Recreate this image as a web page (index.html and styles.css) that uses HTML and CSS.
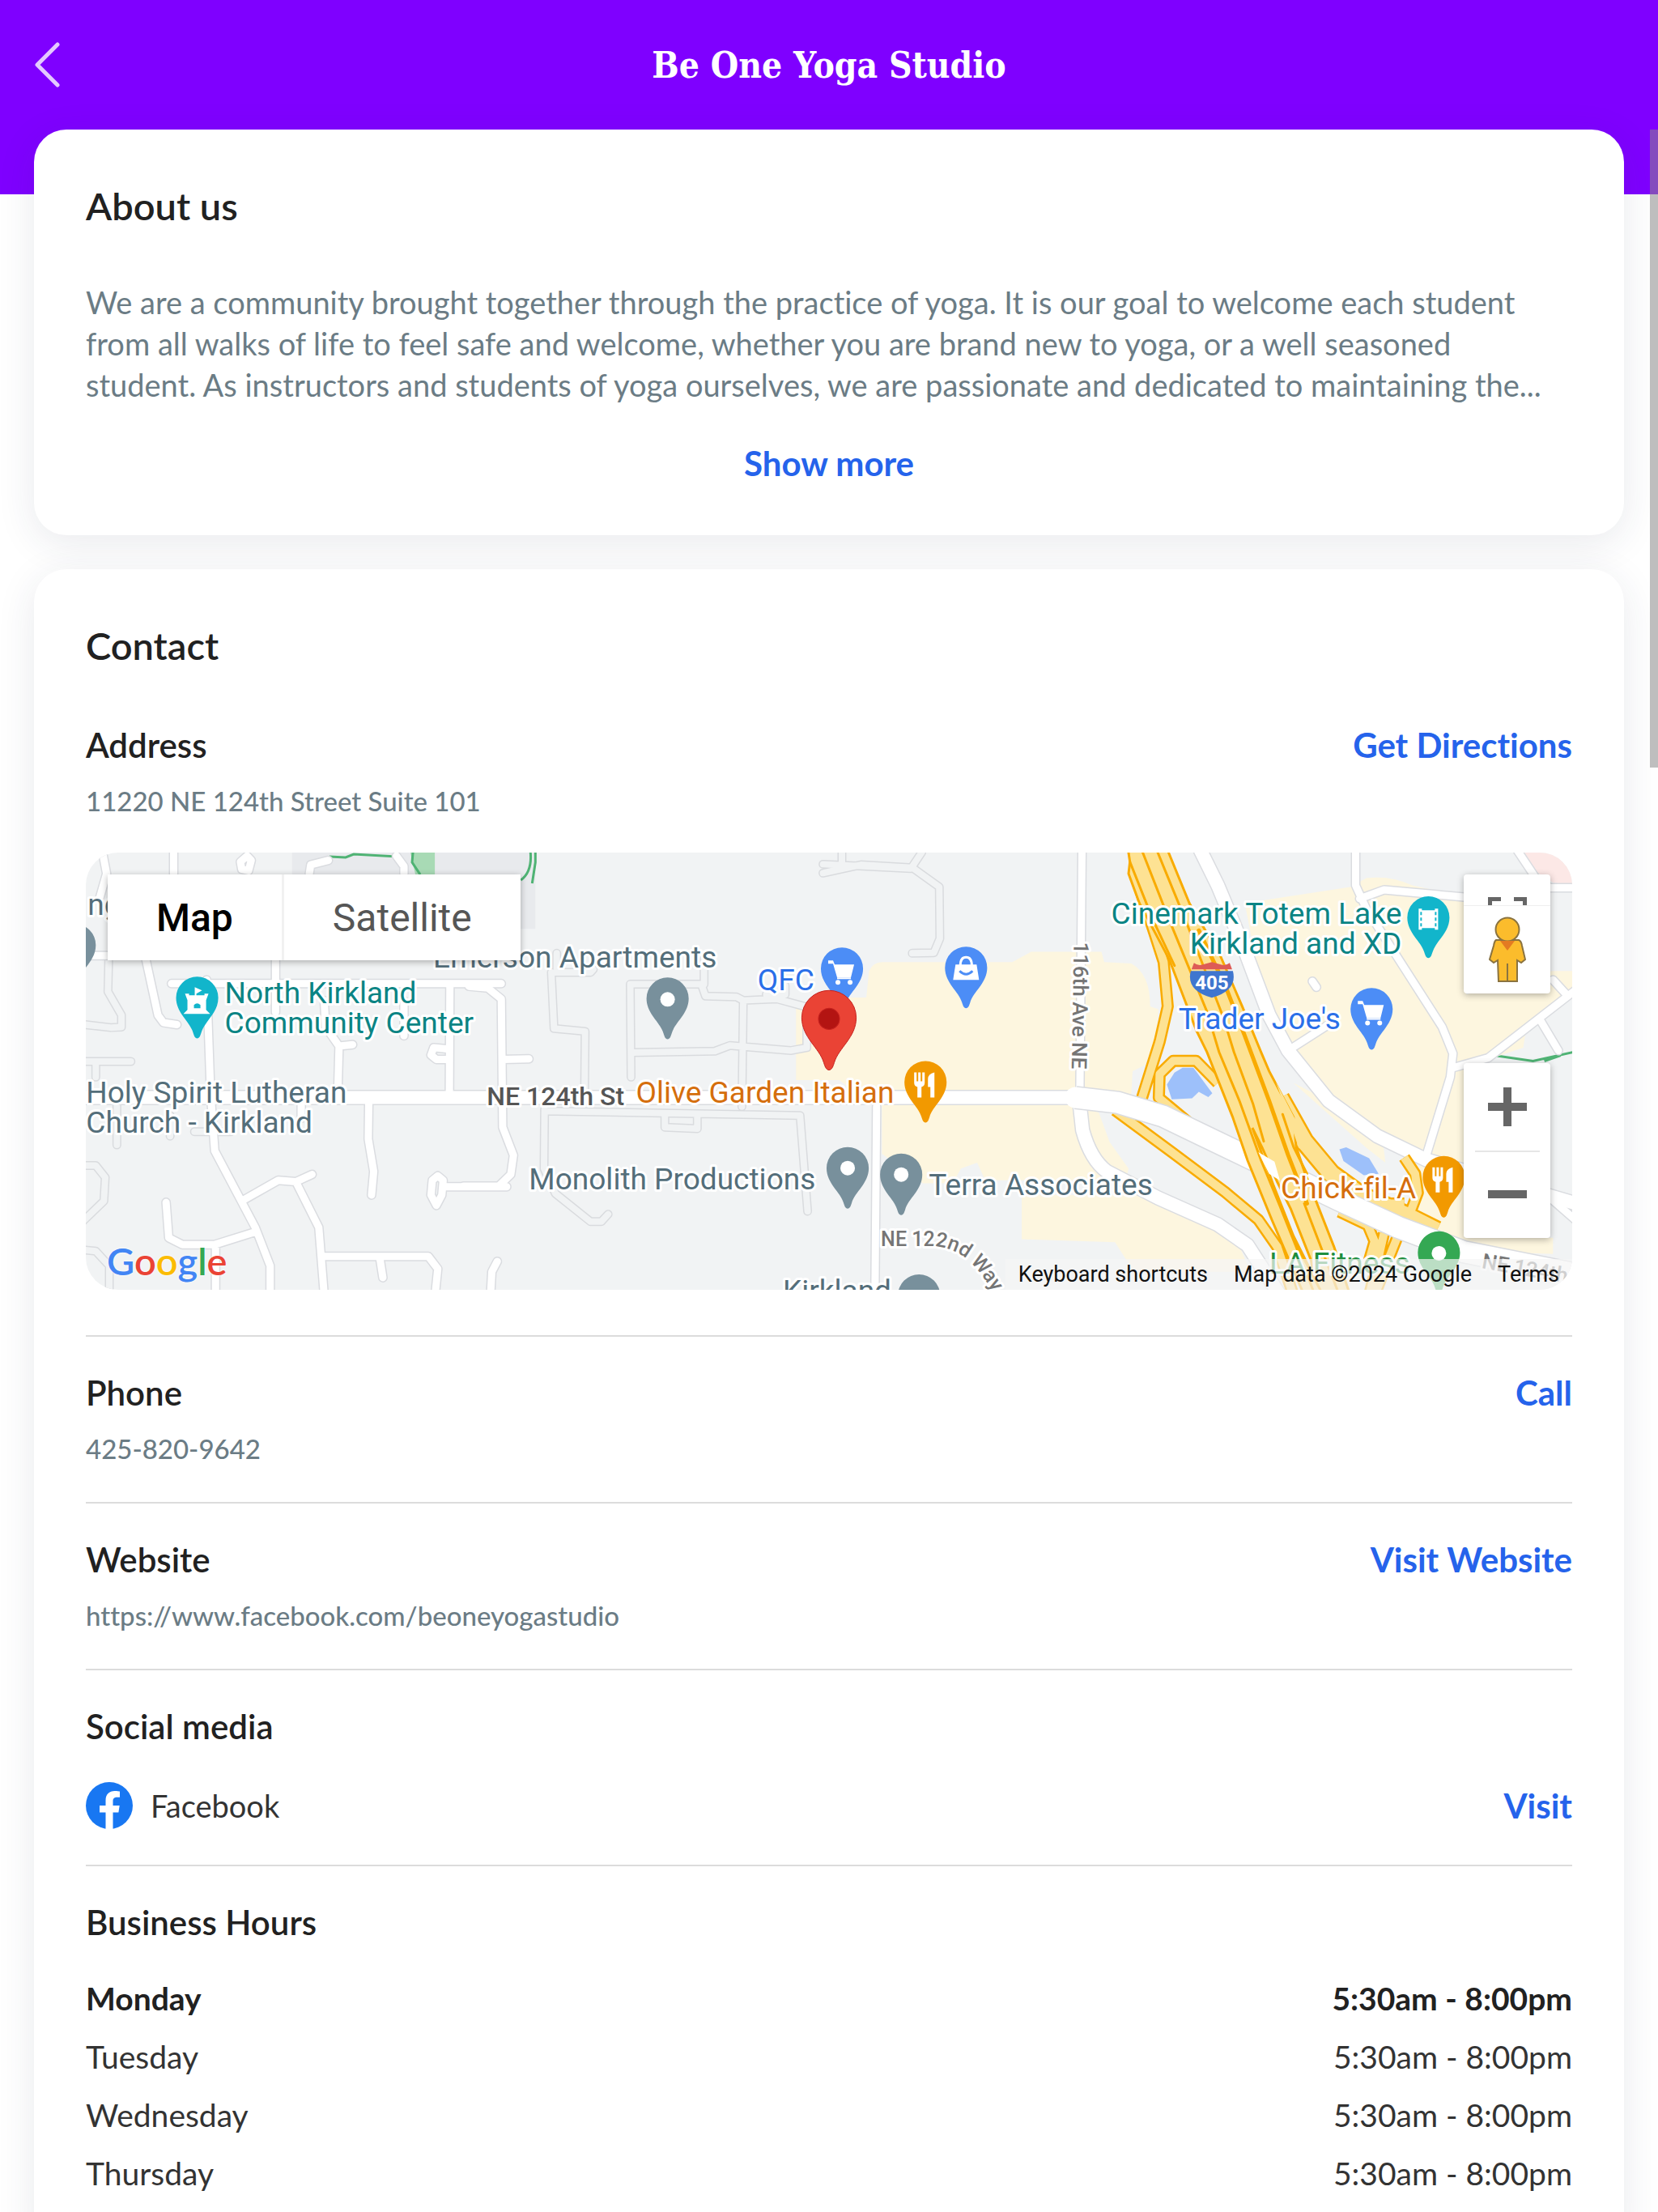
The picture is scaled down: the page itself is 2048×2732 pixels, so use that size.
FILE: index.html
```html
<!DOCTYPE html>
<html lang="en">
<head>
<meta charset="utf-8">
<meta name="viewport" content="width=device-width, initial-scale=1">
<title>Be One Yoga Studio</title>
<link rel="stylesheet" href="styles.css">
</head>
<body>
<div class="app">
  <header class="topbar">
    <button class="back" type="button" aria-label="Back">
      <svg viewBox="0 0 32 56" width="32" height="56"><path d="M29 3 4 28l25 25" fill="none" stroke="currentColor" stroke-width="5" stroke-linecap="round" stroke-linejoin="round"/></svg>
    </button>
    <h1 class="title">Be One Yoga Studio</h1>
  </header>

  <main class="content">
    <section class="card">
      <h2 class="card-title">About us</h2>
      <p class="about">We are a community brought together through the practice of yoga. It is our goal to welcome each student<br>from all walks of life to feel safe and welcome, whether you are brand new to yoga, or a well seasoned<br>student. As instructors and students of yoga ourselves, we are passionate and dedicated to maintaining the...</p>
      <button class="link show-more" type="button">Show more</button>
    </section>

    <section class="card">
      <h2 class="card-title">Contact</h2>

      <div class="entry entry-first">
        <div class="row"><h3 class="label">Address</h3><a class="link" href="#directions">Get Directions</a></div>
        <p class="value">11220 NE 124th Street Suite 101</p>
        <div class="map">
          <svg class="map-art" viewBox="0 0 1836 539" preserveAspectRatio="xMidYMid slice">
            <defs>
              <path id="pin" d="M0 0C-3 0-4-4-5-7C-9-21-26-31-26-50A26 26 0 0 1 26-50C26-31 9-21 5-7C4-4 3 0 0 0z"/>
              <g id="cart"><path d="M-17-60h6l2 5h24l-4 16H-6l-5-17h-6z"/><path d="M-6-38h17" stroke="#fff" stroke-width="2"/><circle cx="-5" cy="-33" r="3"/><circle cx="10" cy="-33" r="3"/></g>
              <g id="food"><path d="M-14-62h3v11h2v-11h3v11h2v-11h3v13q0 4-4 5v13h-5v-13q-4-1-4-5z"/><path d="M11-62v31H6v-13H3v-10q0-6 8-8z"/></g>
              <g id="lots">
                <g transform="translate(474 -14) scale(.3333 .3635)">
                  <path d="M305 445 315 635 430 645 428 840M325 380v65M320 445H450L460 435M870 400V485M600 800 597 485H820L860 485 875 525 990 528 1015 540 1140 535 1240 560M1015 540 1010 900M607 717 910 712 965 693 1190 710 1250 700V620M280 910 278 1110 320 1195 450 1290H490L515 1265M280 915 1225 930 1253 1255M725 930V970L845 975V930M1380 38V85M1310 108 1450 80 1640 90M1100 520H1170V490"/>
                </g>
                <g transform="translate(954 -14) scale(.3333 .3635)">
                  <path d="M-130 78 195 93 235 38M205 93 300 155 302 330 280 378 200 380"/>
                </g>
                <g transform="translate(-6 -14) scale(.3333 .3635)">
                  <path d="M108 390 105 510 155 590V630L115 632 0 620M0 1100H60L95 1140 90 1220 0 1300M0 1385 60 1390 110 1440V1540M0 747H190M60 755V800M138 890V1030M335 930V1000M425 985H560"/>
                </g>
              </g>
              <g id="streets">
                <g transform="translate(-6 -14) scale(.3333 .3635)">
                  <path d="M85 38 100 110 75 190M348 38V110M620 50 595 70 600 95 625 100 635 65zM0 388H100M725 400V580M340 483H1490L1560 483M470 470 485 860 500 1050 650 1310 705 1440V1540M610 1215 735 1150 800 1155 860 1130M800 1155 885 1310 905 1540M905 1408H1290L1325 1450 1315 1540M1110 1410 1122 1480M320 1225 330 1345 380 1368H500L650 1325M503 1368V1540M905 540 910 630 960 695 955 860M960 695 1010 690M1200 540V660M1370 490 1368 860M1365 705 1310 700 1300 725 1320 740H1365M1070 880 1068 1010 1088 1120 1080 1200M820 890V940M1325 1135 1305 1150 1300 1200 1320 1235 1340 1200 1345 1150zM1350 1172 1580 1172M850 110 855 80 920 65M1172 50 1200 85V110M245 400 290 590 310 615 360 622"/>
                </g>
                <g transform="translate(474 -14) scale(.3333 .3635)">
                  <path d="M0 492 70 498 120 535 125 970 165 1065 155 1130 110 1170H-20M125 740 222 738M80 1540 85 1460 105 1425"/>
                </g>
                <g transform="translate(954 -14) scale(.3333 .3635)">
                  <path d="M828 20 820 860M68 900 62 1540"/>
                </g>
                <g transform="translate(1394 -14) scale(.3333 .3635)">
                  <path d="M520 20V150L560 230 700 430 840 630 880 720 870 800 780 1070M535 195 625 165 930 190M885 767 1010 735 1340 500M1110 20 1190 130 1240 158H1340M1250 470 1300 520M1205 610 1270 710M270 710 440 610M360 475 375 495M1240 1210 1340 1290"/>
                </g>
              </g>
              <g id="avenues">
                <path d="M0 302H1220"/>
                <g transform="translate(954 -14) scale(.3333 .3635)">
                  <path d="M818 880 830 980Q860 1080 920 1120L1110 1210 1330 1300 1440 1370 1560 1540"/>
                </g>
                <g transform="translate(1394 -14) scale(.3333 .3635)">
                  <path d="M-60 20 10 150 110 370 200 590 270 710 420 880 600 1000 780 1080 1340 1230"/>
                </g>
              </g>
              <path id="arterial" d="M1222 302 1274 308 1330 325 1390 354 1440 378 1480 396 1546 428 1620 462 1700 492 1840 520"/>
              <g id="ramps">
                <g transform="translate(954 -14) scale(.3333 .3635)">
                  <path d="M1020 100 1095 310 1130 410 1145 560 1115 680 1050 870M1230 960 1112 870 1115 790 1165 745H1250L1330 820"/>
                </g>
                <g transform="translate(1274 246) scale(.3333)">
                  <path d="M-10 215 200 370 400 520 520 620 590 720 650 900M1060 390 1100 450 1110 520 1070 625M970 560H1060M820 590 925 640 950 700 930 770M1040 670 1000 770 950 900M985 670 960 780 930 900"/>
                </g>
              </g>
              <path id="exit" transform="translate(1274 246) scale(.3333)" d="M600 170 690 330 790 450 900 530 1060 600 1180 660"/>
              <path id="way" d="M982 485H1046Q1072 487 1089 502T1122 545"/>
            </defs>

            <rect width="1836" height="539" fill="#f1f3f4"/>
            <path d="M256 0h300v94H256z" fill="#e8eaed"/>
            <path d="M402 0h30v27h-24z" fill="#a8dab5"/>
            <g class="trail"><path d="M302 5 322 6 332 2 385 5V0M405 0 404 12 414 27M550 0Q552 24 538 34M556 0V12L552 38"/><path d="M1738 250 1786 257 1836 246M1800 257 1820 250"/></g>
            <g fill="#fdf6df">
              <path transform="translate(954 -14) scale(.3333 .3635)" d="M-230 560-110 540-90 530 30 530 40 440Q55 410 90 410H570L640 375H900L910 410 1010 415Q1080 450 1080 560L1110 570 1100 690 1060 760 1015 780 1010 860H0L-70 810H-230zM88 890H790L890 920 930 1020 1000 1110 990 1150H470L440 1090 380 1110 350 1160H240L88 1060zM605 1200H1120L1280 1300 1400 1350 1450 1460H1020L950 1360 605 1350z"/>
              <path transform="translate(1394 -14) scale(.3333 .3635)" d="M110 210 500 155 560 125Q650 115 730 150L930 190V520L1245 440H1326V500L1150 640 1140 700 1010 740 940 760 930 1110 1000 1345H1250V1400L950 1390 720 1290 760 1090 600 1000 400 870 280 700 200 560 150 400zM290 820 420 880 620 1010 630 1090 560 1040z"/>
            </g>
            <path transform="translate(1394 -14) scale(.3333 .3635)" d="M1140 38H1326V150L1250 140 1190 105z" fill="#fce8e6"/>
            <g fill="#9dc0fa">
              <path transform="translate(954 -14) scale(.3333 .3635)" d="M1142 825 1170 785 1200 768H1240L1270 805 1310 855 1295 868 1260 850 1235 872 1160 875z"/>
              <path transform="translate(1394 -14) scale(.3333 .3635)" d="M460 1045 485 1038 570 1075 605 1128 550 1133 475 1085z"/>
            </g>

            <use href="#lots" class="lots-edge"/><use href="#lots" class="lots-fill"/>
            <use href="#streets" class="streets-edge"/><use href="#avenues" class="avenues-edge"/>
            <use href="#streets" class="streets-fill"/><use href="#avenues" class="avenues-fill"/>
            <use href="#ramps" class="ramps-edge"/><use href="#exit" class="exit-edge"/>
            <use href="#ramps" class="ramps-fill"/><use href="#exit" class="exit-fill"/>
            <use href="#arterial" class="arterial-edge"/><use href="#arterial" class="arterial-fill"/>
            <g transform="translate(1274 246) scale(.3333)">
              <path class="freeway" d="M35-770 45-704 40-660 80-551 190-344 290-82 330 0 425 240 480 400 570 620 630 760 690 900H860L800 720 690 440 660 350 650 240 560 70 530 0 460-170 380-355 265-551 175-770z"/>
              <path d="M585 110 655 245 760 375 670 355z" fill="#fde293"/>
              <g class="lanes">
                <path d="M80-770 190-490 330-150 375 0 450 180 530 400 600 570 660 720 730 900M135-770 250-490 390-130 430 0 500 190 540 330M45-704 130-490 210-320M655 700 760 900M690 560 820 900M610 230 650 350 700 450"/>
                <path class="median" d="M300-450 400-240 470-60 560 180 630 380 700 560"/>
              </g>
              <path d="M498 280 535 355 590 480 640 580 715 770 725 830 650 680 575 490z" fill="#f1f3f4" stroke="#f9ab00" stroke-width="3"/>
              <path d="M520 370 580 405 600 475 560 450z" fill="#fff"/>
            </g>

            <g class="poi">
              <use href="#pin" x="-12" y="164" fill="#78909c"/>
              <use href="#pin" x="139" y="229" fill="#12b5cb"/>
              <path d="M124 174h5v2h7v-10l9 4-7 4v2h10v-2h5l-3 8v12l5 5h-33l5-5v-12z" fill="#fff"/>
              <path d="M135 192v-4q4-4 8 0v4z" fill="#12b5cb"/>
              <use href="#pin" x="719" y="230" fill="#78909c"/><circle cx="719" cy="181" r="9" fill="#fff"/>
              <use href="#pin" x="934" y="193" fill="#4c8df6"/><use href="#cart" x="934" y="193" fill="#fff"/>
              <use href="#pin" x="1087" y="192" fill="#4c8df6"/>
              <path d="M1074 138h26l3 19h-32z" fill="#fff"/><path d="M1080 139q0-10 7-10t7 10" fill="none" stroke="#fff" stroke-width="3"/><path d="M1079 146q8 8 16 0" fill="none" stroke="#4c8df6" stroke-width="3"/>
              <use href="#pin" x="1037" y="333" fill="#f29900"/><use href="#food" x="1037" y="333" fill="#fff"/>
              <use href="#pin" x="941" y="439" fill="#78909c"/><circle cx="941" cy="389" r="9" fill="#fff"/>
              <use href="#pin" x="1007" y="447" fill="#78909c"/><circle cx="1007" cy="397" r="9" fill="#fff"/>
              <use href="#pin" x="1029" y="596" fill="#78909c"/>
              <use href="#pin" x="1657" y="130" fill="#12b5cb"/>
              <path d="M1645 69h4v2h16v-2h4v26h-4v-2h-16v2h-4z" fill="#fff"/><path d="M1648 73v20M1666 73v20" stroke="#12b5cb" stroke-width="2" stroke-dasharray="4 3"/>
              <use href="#pin" x="1587" y="243" fill="#4c8df6"/><use href="#cart" x="1587" y="243" fill="#fff"/>
              <use href="#pin" x="1676" y="450" fill="#f29900"/><use href="#food" x="1676" y="450" fill="#fff"/>
              <use href="#pin" x="1670" y="543" fill="#34a853"/><circle cx="1670" cy="494" r="9" fill="#fff"/>
            </g>

            <path d="M1364 146H1416Q1422 170 1390 179Q1358 170 1364 146z" fill="#3f76cf"/>
            <path d="M1365 144 1368 136Q1373 140 1379 138L1390 135 1401 138Q1407 140 1412 136L1415 144z" fill="#dd5b56"/>
            <text class="shield" x="1390" y="169">405</text>

            <g class="names">
              <text x="4" y="77">ng</text>
              <text x="430" y="142">Emerson Apartments</text>
              <text class="teal" x="173" y="186">North Kirkland</text>
              <text class="teal" x="173" y="223">Community Center</text>
              <text x="2" y="308">Holy Spirit Lutheran</text>
              <text x="2" y="345">Church - Kirkland</text>
              <text class="blue" x="830" y="170">QFC</text>
              <text class="orange" x="680" y="308">Olive Garden Italian</text>
              <text x="548" y="415">Monolith Productions</text>
              <text x="1041" y="422">Terra Associates</text>
              <text x="861" y="553">Kirkland</text>
              <text class="teal end" x="1624" y="88">Cinemark Totem Lake</text>
              <text class="teal end" x="1624" y="125">Kirkland and XD</text>
              <text class="blue" x="1349" y="218">Trader Joe's</text>
              <text class="orange" x="1475" y="426">Chick-fil-A</text>
              <text class="green" x="1461" y="519">LA Fitness</text>
            </g>
            <g class="road-names">
              <text class="main-road" x="496" y="311">NE 124th St</text>
              <text transform="translate(1220 110) rotate(91)">116th Ave NE</text>
              <text class="curved"><textPath href="#way">NE 122nd Way</textPath></text>
              <text transform="translate(1722 512) rotate(10)">NE 124th</text>
            </g>

            <g class="red-pin"><use href="#pin" x="0" y="0" transform="translate(918 268) scale(1.29)"/><circle cx="918" cy="205" r="13"/></g>
          </svg>

          <div class="map-types">
            <button class="map-type is-on" type="button">Map</button><button class="map-type" type="button">Satellite</button>
          </div>
          <div class="map-top-tools">
            <button class="tool fullscreen" type="button" aria-label="Full screen"><svg viewBox="0 0 48 10" width="48" height="10"><path d="M0 0H16V5H5V10H0zM32 0H48V10H43V5H32z" fill="#666"/></svg></button>
            <button class="tool pegman" type="button" aria-label="Street View">
              <svg viewBox="0 0 46 82" width="46" height="82"><g fill="#fbbc2c" stroke="#8a7340" stroke-width="2"><path d="M9 29H37Q40 30 41 36L45 53 40 57 35 54 35 80H12L11 54 6 57 1 53 6 36Q7 30 9 29z"/><circle cx="23" cy="16" r="14.500"/></g><path d="M14 30H32L23 42z" fill="#e37b22"/><path d="M23 58V80" stroke="#8a7340" stroke-width="2"/></svg>
            </button>
          </div>
          <div class="map-zoom">
            <button class="tool zoom" type="button" aria-label="Zoom in"><svg viewBox="0 0 48 48" width="48" height="48"><path d="M19 0H29V19H48V29H29V48H19V29H0V19H19z" fill="#666"/></svg></button>
            <button class="tool zoom" type="button" aria-label="Zoom out"><svg viewBox="0 0 48 48" width="48" height="48"><path d="M0 19H48V29H0z" fill="#666"/></svg></button>
          </div>
          <div class="brand"><span class="g-blue">G</span><span class="g-red">o</span><span class="g-yellow">o</span><span class="g-blue">g</span><span class="g-green">l</span><span class="g-red">e</span></div>
          <div class="legal"><button class="legal-item" type="button">Keyboard shortcuts</button><span class="legal-item">Map data ©2024 Google</span><a class="legal-item" href="#terms">Terms</a></div>
        </div>
      </div>

      <div class="entry">
        <div class="row"><h3 class="label">Phone</h3><a class="link" href="tel:4258209642">Call</a></div>
        <p class="value">425-820-9642</p>
      </div>

      <div class="entry">
        <div class="row"><h3 class="label">Website</h3><a class="link" href="https://www.facebook.com/beoneyogastudio">Visit Website</a></div>
        <p class="value">https://www.facebook.com/beoneyogastudio</p>
      </div>

      <div class="entry">
        <h3 class="label">Social media</h3>
        <div class="row social">
          <span class="network">
            <svg viewBox="0 0 58 58" width="58" height="58"><circle cx="29" cy="29" r="29" fill="#1877f2"/><path d="M24.500 58V37.500H17V29h7.500v-6.500C24.500 15 29 11 35.700 11c3.200 0 6.300.6 6.300.6v7.200h-3.700c-3.600 0-4.800 2.200-4.800 4.600V29h8.200l-1.300 8.500h-6.900V58z" fill="#fff"/></svg>
            Facebook
          </span>
          <a class="link" href="https://www.facebook.com/beoneyogastudio">Visit</a>
        </div>
      </div>

      <div class="entry">
        <h3 class="label">Business Hours</h3>
        <table class="hours">
          <tr class="today"><th scope="row">Monday</th><td>5:30am - 8:00pm</td></tr>
          <tr><th scope="row">Tuesday</th><td>5:30am - 8:00pm</td></tr>
          <tr><th scope="row">Wednesday</th><td>5:30am - 8:00pm</td></tr>
          <tr><th scope="row">Thursday</th><td>5:30am - 8:00pm</td></tr>
        </table>
      </div>
    </section>
  </main>
  <div class="scroll-thumb"></div>
</div>
</body>
</html>
```
FILE: styles.css
```css
* { box-sizing: border-box; }

body {
  margin: 0;
  background: #fff;
  color: #212121;
  font-family: Lato, "Open Sans", sans-serif;
  font-size: 38px;
  font-variant-ligatures: no-common-ligatures;
}

h1, h2, h3, p { margin: 0; }

button {
  padding: 0;
  border: 0;
  background: none;
  font: inherit;
  color: inherit;
}

svg { display: block; }

.app {
  position: relative;
  height: 100vh;
  overflow: hidden;
  background: linear-gradient(#7f00ff 240px, #fff 240px);
}

/* Header */
.topbar {
  display: grid;
  grid-template-columns: 80px 1fr 80px;
  align-items: center;
  height: 160px;
  padding: 0 42px;
  color: #fff;
}

.back { color: #e4c9ff; }

.title {
  font-family: "DejaVu Serif Condensed", "DejaVu Serif", serif;
  font-size: 44px;
  font-weight: 700;
  text-align: center;
}

/* Cards */
.content {
  display: flex;
  flex-direction: column;
  gap: 42px;
  padding: 0 42px;
}

.card {
  padding: 64px;
  border-radius: 40px;
  background: #fff;
  box-shadow: 0 10px 48px rgba(40, 50, 80, 0.1);
}

.card-title {
  font-size: 47px;
  font-weight: 600;
  line-height: 60px;
}

.about {
  margin-top: 64px;
  color: #6b7c85;
  line-height: 51px;
}

.link {
  color: #2563eb;
  font-size: 42px;
  font-weight: 700;
  line-height: 50px;
  text-decoration: none;
}

.show-more {
  display: block;
  margin: 46px auto 0;
}

/* Contact entries */
.entry {
  padding: 44px 0;
  border-top: 2px solid #dcdcdc;
}

.entry-first {
  padding: 68px 0 56px;
  border-top: 0;
}

.entry:last-child { padding-bottom: 0; }

.row {
  display: flex;
  align-items: center;
  justify-content: space-between;
}

.label {
  font-size: 42px;
  font-weight: 600;
  line-height: 50px;
}

.value {
  margin-top: 22px;
  color: #6b7c85;
  font-size: 33px;
  font-weight: 500;
  line-height: 44px;
}

.social { margin-top: 44px; }

.network {
  display: flex;
  align-items: center;
  gap: 22px;
  color: #333;
}

.hours {
  width: 100%;
  margin-top: 33px;
  border-collapse: collapse;
  color: #333;
  font-size: 39px;
}

.hours th, .hours td {
  height: 72px;
  padding: 0;
  font-weight: 400;
  text-align: left;
}

.hours td { text-align: right; }

.hours .today th, .hours .today td {
  color: #212121;
  font-weight: 700;
}

/* Map */
.map {
  position: relative;
  height: 540px;
  margin-top: 42px;
  border-radius: 40px;
  overflow: hidden;
  font-family: Roboto, sans-serif;
}

.map-art {
  width: 100%;
  height: 100%;
}

.map-art path { vector-effect: non-scaling-stroke; }

.trail { fill: none; stroke: #4fb374; stroke-width: 3; }

.lots-edge, .lots-fill, .streets-edge, .streets-fill,
.avenues-edge, .avenues-fill, .arterial-edge, .arterial-fill,
.ramps-edge, .ramps-fill, .exit-edge, .exit-fill, .lanes {
  fill: none;
  stroke-linecap: round;
  stroke-linejoin: round;
}

.lots-edge { stroke: #d9dbde; stroke-width: 11px; }
.lots-fill { stroke: #f1f3f4; stroke-width: 8px; }
.streets-edge { stroke: #dadce0; stroke-width: 12px; }
.streets-fill { stroke: #fff; stroke-width: 9px; }
.avenues-edge { stroke: #dadce0; stroke-width: 19px; }
.avenues-fill { stroke: #fff; stroke-width: 16px; }
.arterial-edge { stroke: #dadce0; stroke-width: 29px; stroke-linecap: butt; }
.arterial-fill { stroke: #fff; stroke-width: 26px; }
.ramps-edge { stroke: #f9ab00; stroke-width: 15px; stroke-linecap: butt; }
.ramps-fill { stroke: #fde293; stroke-width: 10px; stroke-linecap: butt; }
.exit-edge { stroke: #f9ab00; stroke-width: 25px; stroke-linecap: butt; }
.exit-fill { stroke: #fde293; stroke-width: 20px; stroke-linecap: butt; }
.freeway { fill: #fde293; stroke: #f9ab00; stroke-width: 3px; }
.lanes { stroke: #f9ab00; stroke-width: 3px; }
.median { stroke-width: 5px; }

.names, .road-names {
  paint-order: stroke;
  stroke: #fff;
  stroke-width: 6px;
  stroke-linejoin: round;
}

.names { fill: #546e7a; font-size: 37px; }
.names .teal { fill: #0b8484; }
.names .blue { fill: #2a6fe8; }
.names .orange { fill: #d56e0c; }
.names .green { fill: #1e8e3e; }
.names .end { text-anchor: end; }

.road-names { fill: #757575; font-size: 26px; font-weight: 500; }
.road-names .main-road { fill: #555; font-size: 32px; }
.road-names .curved { font-size: 25px; }

.shield {
  fill: #fff;
  font-size: 24px;
  font-weight: 700;
  text-anchor: middle;
}

.red-pin { fill: #ea4335; stroke: #c5221f; stroke-width: 1px; }
.red-pin circle { fill: #b31412; }

.map-types {
  position: absolute;
  top: 27px;
  left: 27px;
  display: flex;
  height: 106px;
  background: #fff;
  box-shadow: 0 2px 8px rgba(0, 0, 0, 0.3);
}

.map-type {
  padding: 0 60px;
  color: #565656;
  font-size: 48px;
}

.map-type.is-on {
  border-right: 3px solid #f1f1f1;
  color: #000;
  font-weight: 500;
}

.map-top-tools, .map-zoom {
  position: absolute;
  right: 27px;
  width: 107px;
  background: #fff;
  border-radius: 4px;
  box-shadow: 0 2px 8px rgba(0, 0, 0, 0.3);
}

.map-top-tools { top: 27px; }
.map-zoom { bottom: 64px; }

.tool {
  display: grid;
  justify-items: center;
  align-items: center;
  width: 100%;
}

.fullscreen { height: 38px; align-items: end; }
.pegman { height: 109px; border-top: 1px solid #eee; }
.zoom { height: 108px; }

.zoom + .zoom {
  background: linear-gradient(#e6e6e6, #e6e6e6) top / 80px 2px no-repeat;
}

.brand {
  position: absolute;
  left: 26px;
  bottom: 6px;
  font-family: Lato, sans-serif;
  font-size: 47px;
  font-weight: 600;
  line-height: 60px;
  text-shadow: 0 0 3px #fff;
}

.g-blue { color: #4285f4; }
.g-red { color: #ea4335; }
.g-yellow { color: #fbbc04; }
.g-green { color: #34a853; }

.legal {
  position: absolute;
  right: 0;
  bottom: 0;
  display: flex;
  gap: 32px;
  height: 38px;
  padding: 0 16px;
  background: rgba(245, 245, 245, 0.7);
  font-size: 27px;
  line-height: 38px;
}

.legal-item { color: #111; text-decoration: none; }

.scroll-thumb {
  position: absolute;
  top: 160px;
  right: 0;
  width: 10px;
  height: 788px;
  background: rgba(136, 136, 136, 0.55);
}
```
